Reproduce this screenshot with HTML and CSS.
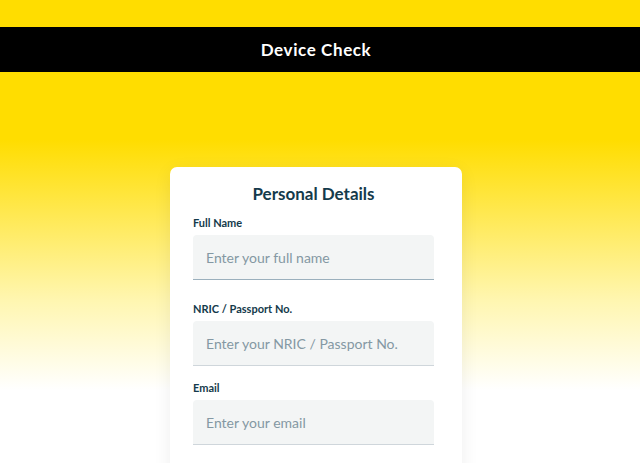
FILE: index.html
```html
<!DOCTYPE html>
<html lang="en">
<head>
    <meta charset="UTF-8">
    <meta name="viewport" content="width=device-width, initial-scale=1.0">
    <title>Device Check</title>
    <link rel="stylesheet" href="styles.css">
</head>
<body>
    <div class="top-strip"></div>

    <header class="page-header">
        <h1>Device Check</h1>
    </header>

    <main class="page-body">
        <div class="card">
            <h2>Personal Details</h2>
            <form class="details-form">
                <label for="fullName">Full Name</label>
                <input type="text" id="fullName" name="fullName" class="active" placeholder="Enter your full name">

                <label for="nricNo">NRIC / Passport No.</label>
                <input type="text" id="nricNo" name="nricNo" placeholder="Enter your NRIC / Passport No.">

                <label for="email">Email</label>
                <input type="text" id="email" name="email" placeholder="Enter your email">
            </form>
        </div>
    </main>
</body>
</html>
```

FILE: styles.css
```css
body {
    margin: 0;
    height: 463px;
    overflow: hidden;
    font-family: "Lato", "Liberation Sans", sans-serif;
    background: linear-gradient(to bottom, #ffdd00 0, #ffdd00 140px, #fff6b0 300px, #ffffff 390px);
}

.top-strip {
    height: 27px;
}

.page-header {
    height: 45px;
    padding-right: 8px;
    background-color: #000;
    display: flex;
    justify-content: center;
    align-items: center;
}

.page-header h1 {
    margin: 0;
    color: #fff;
    font-size: 17px;
    font-weight: 700;
    letter-spacing: 0.6px;
}

.page-body {
    display: flex;
    justify-content: center;
    padding-top: 95px;
    padding-right: 8px;
}

.card {
    width: 241px;
    padding: 16px 28px 20px 23px;
    background-color: #fff;
    border-radius: 7px;
    box-shadow: 0 4px 18px rgba(0, 0, 0, 0.07);
}

.card h2 {
    margin: 0 0 11px;
    text-align: center;
    font-size: 17px;
    font-weight: 700;
    color: #143a4b;
    line-height: 22px;
}

.details-form {
    display: flex;
    flex-direction: column;
}

.details-form label {
    font-size: 11px;
    font-weight: 700;
    color: #143a4b;
    line-height: 14px;
    margin-bottom: 5px;
}

.details-form input {
    height: 45px;
    box-sizing: border-box;
    padding: 0 13px;
    margin-bottom: 15px;
    border: none;
    border-bottom: 1px solid #cfd6db;
    border-radius: 4px 4px 0 0;
    background-color: #f3f5f5;
    font-family: inherit;
    font-size: 14px;
    color: #143a4b;
    outline: none;
}

.details-form input.active {
    margin-bottom: 22px;
    border-bottom-color: #9bb0bd;
}

.details-form input::placeholder {
    color: #8498a3;
}
```
